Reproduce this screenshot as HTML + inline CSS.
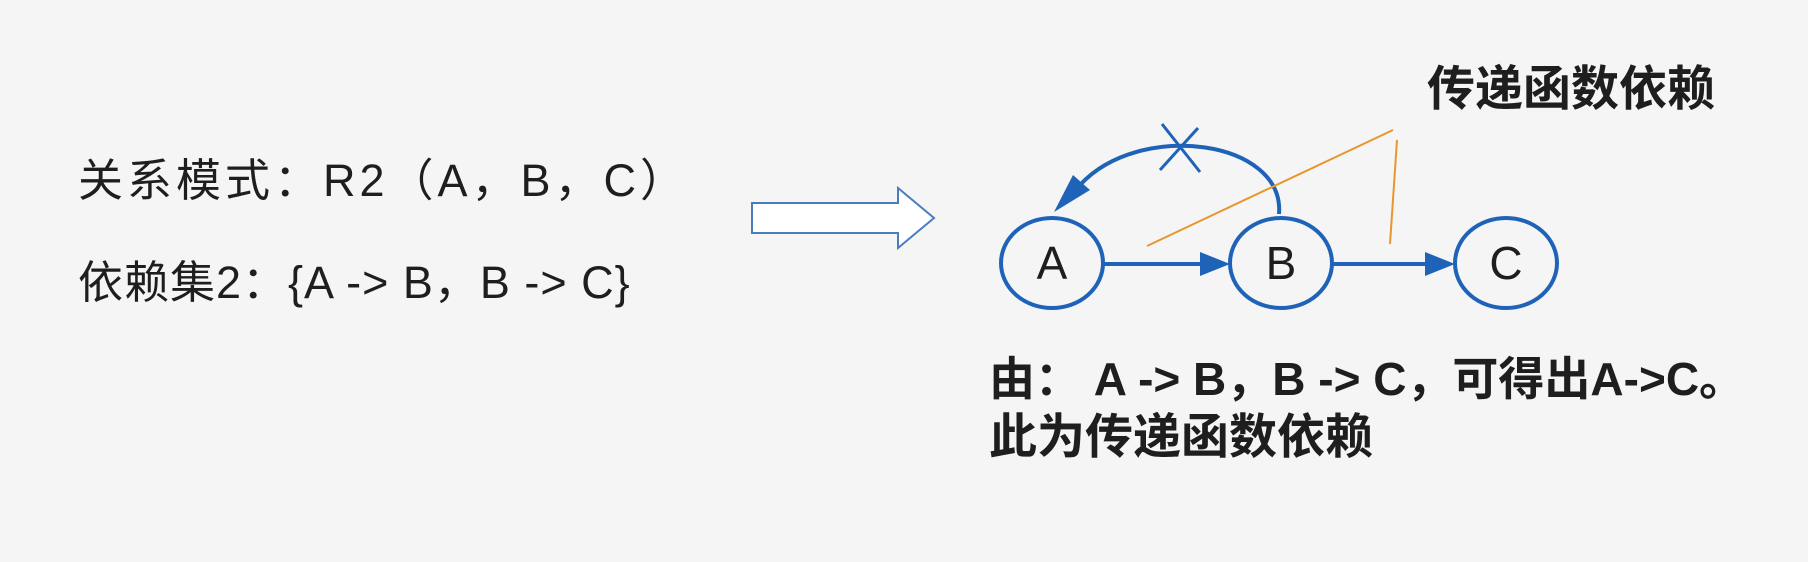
<!DOCTYPE html>
<html><head><meta charset="utf-8"><style>
html,body{margin:0;padding:0;background:#f5f5f5;}
body{width:1808px;height:562px;position:relative;overflow:hidden;font-family:"Liberation Sans","Noto Sans CJK SC",sans-serif;color:#1e1e1e;}
.t{position:absolute;white-space:nowrap;line-height:1;}
.b{font-weight:bold;}
.c{position:absolute;font-size:46px;line-height:1;width:60px;text-align:center;}
</style></head><body>
<div class="t" style="left:78px;top:158px;font-size:45px;letter-spacing:4px;">关系模式：R2（A，B，C）</div>
<div class="t" style="left:78px;top:260px;font-size:45px;letter-spacing:1px;">依赖集2：{A -&gt; B，B -&gt; C}</div>
<div class="t b" style="left:1427px;top:66px;font-size:48px;">传递函数依赖</div>
<div class="t b" style="left:989px;top:356px;font-size:46px;">由： A -&gt; B，B -&gt; C，可得出A-&gt;C。</div>
<div class="t b" style="left:989px;top:414px;font-size:48px;">此为传递函数依赖</div>
<div class="c" style="left:1022px;top:240px;">A</div>
<div class="c" style="left:1251px;top:240px;">B</div>
<div class="c" style="left:1476px;top:240px;">C</div>
<svg width="1808" height="562" style="position:absolute;left:0;top:0">
<polygon points="752,203 898,203 898,188 934,218 898,248 898,233 752,233" fill="#fff" stroke="#4a7cc0" stroke-width="2"/>
<g fill="none" stroke="#1f63b8" stroke-width="4">
<ellipse cx="1052" cy="263" rx="51" ry="45"/>
<ellipse cx="1281" cy="263" rx="51" ry="45"/>
<ellipse cx="1506" cy="263" rx="51" ry="45"/>
<line x1="1104" y1="264" x2="1205" y2="264"/>
<line x1="1333" y1="264" x2="1430" y2="264"/>
<path d="M1279,214 C1285,140 1140,120 1080,185"/>
<line x1="1162" y1="124" x2="1200" y2="172" stroke-width="3"/>
<line x1="1198" y1="128" x2="1160" y2="170" stroke-width="3"/>
</g>
<g fill="#1f63b8">
<polygon points="1230,264 1200,252 1200,276"/>
<polygon points="1455,264 1425,252 1425,276"/>
<polygon points="1054,212 1090,190 1073,175"/>
</g>
<g stroke="#e8962e" stroke-width="2">
<line x1="1147" y1="246" x2="1393" y2="130"/>
<line x1="1397" y1="140" x2="1390" y2="244"/>
</g>
</svg>
</body></html>
